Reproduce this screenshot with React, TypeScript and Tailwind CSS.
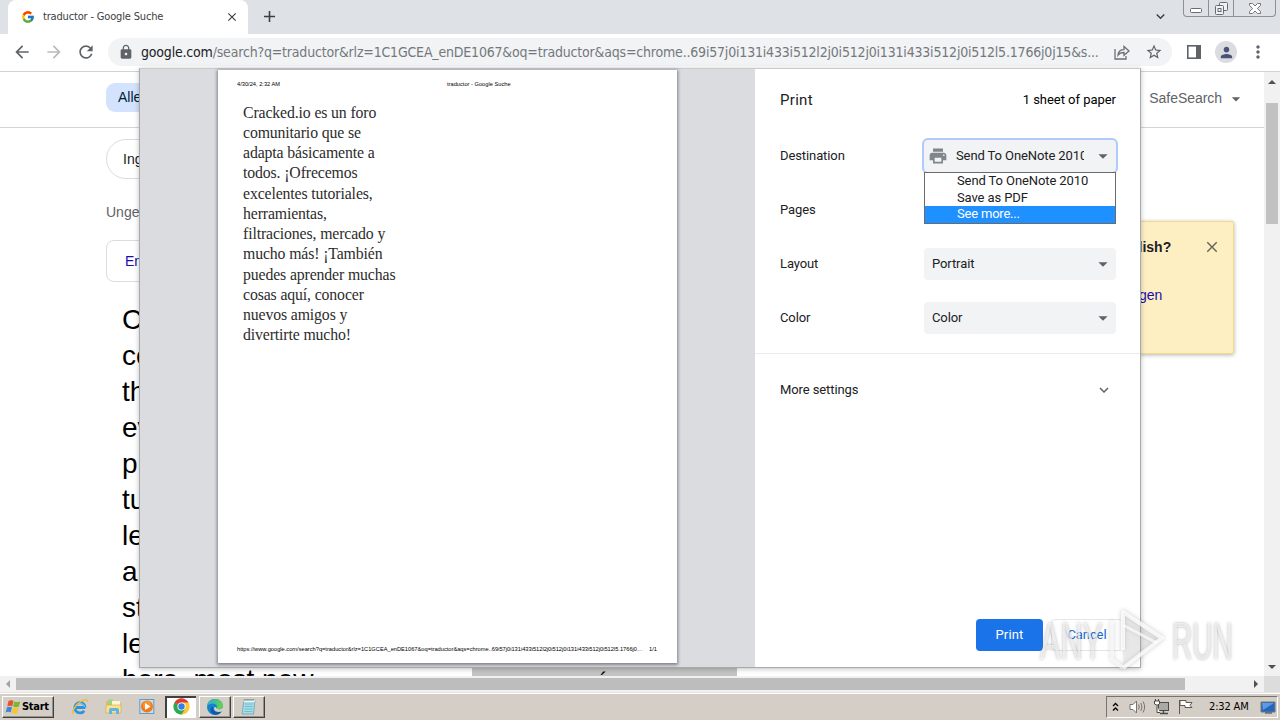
import React from "react";
import {
  MdAdd, MdArrowBack, MdArrowDropDown, MdArrowForward, MdClose, MdExpandMore, MdLock,
  MdMoreVert, MdPerson, MdPrint, MdRefresh, MdStarBorder,
} from "react-icons/md";
import { FcGoogle } from "react-icons/fc";

const previewLines = [
  "Cracked.io es un foro",
  "comunitario que se",
  "adapta básicamente a",
  "todos. ¡Ofrecemos",
  "excelentes tutoriales,",
  "herramientas,",
  "filtraciones, mercado y",
  "mucho más! ¡También",
  "puedes aprender muchas",
  "cosas aquí, conocer",
  "nuevos amigos y",
  "divertirte mucho!",
];

const translatedLines = ["C", "co", "th", "ev", "p", "tu", "le", "ar", "st", "le", "here, most new"];

function TabStrip() {
  return (
    <div className="flex h-[34px] bg-[#dee1e6] pl-2">
      <div className="flex h-full w-[240px] items-center rounded-t-lg bg-white pl-[13px] pr-[9px]">
        <FcGoogle size={14} />
        <span className="ml-2 flex-1 whitespace-nowrap pt-px font-['DejaVu_Sans_Condensed','DejaVu_Sans',sans-serif] text-[11px] tracking-[-0.17px] text-[#3c4043]">
          traductor - Google Suche
        </span>
        <MdClose size={14} className="text-[#3c4043]" />
      </div>
      <MdAdd size={19} className="ml-3 mt-[7px] text-[#3c4043]" />
      <div className="flex-1" />
      <MdExpandMore size={17} className="mr-[14px] mt-2 text-[#3c4043]" />
      <div className="mr-1 flex h-[17px] w-[93px] rounded-b-[4px] border border-t-0 border-[#8b919b] text-[#6b7078]">
        <div className="flex w-[25px] items-center justify-center border-r border-[#8b919b] pt-1">
          <svg width="12" height="8" viewBox="0 0 12 8"><rect x=".5" y="2.5" width="11" height="4" rx="1" fill="#fff" stroke="#666b73" /></svg>
        </div>
        <div className="flex w-[25px] items-center justify-center border-r border-[#8b919b]">
          <svg width="13" height="13" viewBox="0 0 13 13" fill="#f1f2f4" stroke="#666b73">
            <rect x="4.500" y=".5" width="8" height="8" rx="1" />
            <rect x=".5" y="3.500" width="8" height="9" rx="1" />
            <rect x="3" y="6.500" width="3" height="3" />
          </svg>
        </div>
        <div className="flex flex-1 items-center justify-center">
          <svg width="12" height="11" viewBox="0 0 12 11" fill="#fff" stroke="#666b73" strokeWidth=".9">
            <path d="M.5.5h3L6 3 8.500.5h3v2L8.300 5.500l3.200 3v2h-3L6 8l-2.500 2.500h-3v-2l3.200-3L.5 2.500z" />
          </svg>
        </div>
      </div>
    </div>
  );
}

function Toolbar() {
  return (
    <div className="flex h-[38px] items-center border-b border-[#d0d3d6] bg-white pb-px pl-3">
      <MdArrowBack size={20} className="shrink-0 text-[#5f6368]" />
      <MdArrowForward size={20} className="ml-3 shrink-0 text-[#b9bbbe]" />
      <MdRefresh size={20} className="ml-3 shrink-0 text-[#5f6368]" />
      <div className="ml-3 flex h-7 w-[1064px] shrink-0 items-center rounded-full bg-[#f1f3f4] pl-[10px]">
        <MdLock size={16} className="shrink-0 text-[#5f6368]" />
        <div className="ml-[7px] w-[960px] shrink-0 whitespace-nowrap pt-px font-['DejaVu_Sans_Condensed','DejaVu_Sans',sans-serif] text-[14px] font-extralight tracking-[-0.188px] text-[#74787d]">
          <span className="text-[#202124]">google.com</span>/search?q=traductor&amp;rlz=1C1GCEA_enDE1067&amp;oq=traductor&amp;aqs=chrome..69i57j0i131i433i512l2j0i512j0i131i433i512j0i512l5.1766j0j15&amp;s...
        </div>
        <svg className="ml-[13px] shrink-0" width="16" height="15" viewBox="0 0 16 15" fill="none" stroke="#6b6f74" strokeWidth="1.300">
          <path d="M1 4v10h11v-3M4 10c.4-3.500 2.500-5.300 6-5.300V1.500L15 6l-5 4.300V7.500C7.500 7.500 5.500 8 4 10z" />
        </svg>
        <MdStarBorder size={18} className="ml-[15px] shrink-0 text-[#5f6368]" />
      </div>
      <svg className="ml-[15px] shrink-0" width="14" height="14" viewBox="0 0 14 14" fill="none" stroke="#5f6368" strokeWidth="1.600">
        <rect x=".8" y=".8" width="12.400" height="12.400" />
        <path d="M11 1v12" strokeWidth="4" />
      </svg>
      <div className="ml-[14px] flex h-[22px] w-[22px] shrink-0 items-center justify-center rounded-full bg-[#dadce0]">
        <MdPerson size={17} className="text-[#4a5478]" />
      </div>
      <MdMoreVert size={20} className="ml-[11px] shrink-0 text-[#5f6368]" />
    </div>
  );
}

function ResultsPage() {
  return (
    <div className="flex min-w-0 flex-1 flex-col overflow-hidden bg-white font-['Liberation_Sans',Arial,sans-serif]">
      <div className="flex h-14 shrink-0 justify-between border-b border-[#d2d4d7]">
        <div className="ml-[106px] mt-[11px] flex h-[29px] w-[60px] items-center rounded-[9px] bg-[#d3e3fd] pl-3 text-[14px] text-[#001d35]">Alle</div>
        <div className="mr-[18px] flex h-[53px] items-center text-[14px] tracking-[-0.05px] text-[#5f6368]">
          SafeSearch
          <MdArrowDropDown size={20} className="ml-1" />
        </div>
      </div>
      <div className="flex justify-between">
        <div className="ml-[106px] w-[240px] pt-[11px]">
          <div className="flex h-10 w-[100px] items-center rounded-full border border-[#dadce0] pl-4 text-[14px] text-[#202124]">Ing</div>
          <div className="mt-[23px] h-5 text-[14px] leading-5 text-[#5f6368]">Unge</div>
          <div className="mt-[18px] flex h-[42px] w-[100px] items-center rounded-lg border border-[#dadce0] pl-[18px] text-[14px] text-[#1a0dab]">En</div>
          <div className="ml-4 mt-[20px] text-[28px] leading-[36px] text-black">
            {translatedLines.map((line, i) => (
              <div key={i} className={i === 10 ? "whitespace-nowrap" : "w-5"}>{line}</div>
            ))}
          </div>
        </div>
        <div className="mr-[30px] mt-[93px] h-[133px] w-[140px] rounded-[2px] border border-[#f0d98e] bg-[#feefc3] shadow-[0_1px_4px_rgba(0,0,0,0.3)]">
          <div className="flex items-center justify-between pl-[35px] pr-[12px] pt-[13px] text-[14px] font-bold text-[#202124]">
            <span className="pt-[2px]">glish?</span>
            <MdClose size={18} className="text-[#6b675c]" />
          </div>
          <div className="pl-[44px] pt-[27px] text-[14px] leading-5 text-[#1a0dab]">gen</div>
        </div>
      </div>
    </div>
  );
}

function Caret({ dir, color }: { dir: "up" | "down" | "left" | "right"; color: string }) {
  const paths = { up: "M0 6h8L4 2z", down: "M0 2h8L4 6z", left: "M6 0v8L2 4z", right: "M2 0v8l4-4z" };
  return <svg width="8" height="8" viewBox="0 0 8 8" fill={color}><path d={paths[dir]} /></svg>;
}

function VerticalScrollbar() {
  return (
    <div className="flex w-4 shrink-0 flex-col items-center justify-between bg-[#f1f1f1] pb-[5px] pt-[6px]">
      <div className="flex flex-col items-center">
        <Caret dir="up" color="#505050" />
        <div className="mt-[17px] h-[121px] w-3 bg-[#c1c1c1]" />
      </div>
      <Caret dir="down" color="#505050" />
    </div>
  );
}

function HorizontalScrollbar() {
  return (
    <div className="flex h-4 shrink-0 items-center bg-[#f1f1f1]">
      <div className="flex w-4 justify-center"><Caret dir="left" color="#a3a3a3" /></div>
      <div className="h-3 w-[1169px] bg-[#bdbdbd]" />
      <div className="flex flex-1 justify-end pr-1"><Caret dir="right" color="#505050" /></div>
      <div className="h-full w-4 bg-[#dcdcdc]" />
    </div>
  );
}

function WindowsFlag() {
  return (
    <svg width="17" height="16" viewBox="0 0 17 16">
      <path d="M3.500 2c2-1 3.500-.8 5 0L7.300 7.300c-1.600-.8-3.300-.9-5 0z" fill="#e8512a" />
      <path d="M9.300 2.400c2 .9 3.800 1 6 0l-1.400 5.200c-2 .9-3.800.9-5.700 0z" fill="#7cb62f" />
      <path d="M2 8.200c1.800-.8 3.400-.7 5 .1l-1.300 5.200c-1.600-.9-3.200-.9-5 0z" fill="#3f86d8" />
      <path d="M7.900 8.600c2 .9 3.700.9 5.700.1l-1.400 5.200c-2 .9-3.700.8-5.600-.1z" fill="#f8c62b" />
    </svg>
  );
}

function ExplorerE() {
  return (
    <svg width="18" height="18" viewBox="0 0 18 18" fill="none">
      <path d="M14.200 9.500H5.300M14.200 9.500a5.200 5.200 0 1 0-1 3.300" stroke="#2c93dc" strokeWidth="2.800" />
      <path d="M13.700 9.200a4.800 4.800 0 0 0-9.200-1" stroke="#7fd0f6" strokeWidth="1" />
      <path d="M2.700 15.800C-.5 15 5 5.500 12 2.400c3.300-1.400 4.800-.7 4.100 1.600" stroke="#eebc36" strokeWidth="1.400" />
    </svg>
  );
}

function FolderIcon() {
  return (
    <svg width="18" height="17" viewBox="0 0 18 17">
      <path d="M1 3h6l1 2h8v10H1z" fill="#e5bd55" />
      <path d="M3 1.500h5V7H3z" fill="#9bd38b" />
      <path d="M7 3h8v5H7z" fill="#fff6cb" />
      <path d="M1 7h15v8H1z" fill="#f8e28d" stroke="#d4aa48" strokeWidth=".6" />
      <path d="M4 16v-4q0-2 2-2h6q2 0 2 2v4h-3v-3H7v3z" fill="#63b5e1" />
    </svg>
  );
}

function MediaIcon() {
  return (
    <svg width="17" height="17" viewBox="0 0 17 17">
      <rect x=".8" y="1.500" width="14" height="14" fill="#c6def1" stroke="#639bc8" />
      <circle cx="8" cy="8.500" r="6" fill="#f37a13" />
      <circle cx="8" cy="7" r="4" fill="#ffa444" opacity=".6" />
      <path d="M6 5v7l5.300-3.500z" fill="#fff" />
    </svg>
  );
}

function ChromeIcon() {
  return (
    <svg width="17" height="17" viewBox="0 0 48 48">
      <path d="M24 24 4.100 12.500A23 23 0 0 1 43.900 12.500z" fill="#e33b2e" />
      <path d="M24 24 4.100 12.500A23 23 0 0 0 24 47z" fill="#2da94f" />
      <path d="M24 24V47A23 23 0 0 0 43.900 12.500H24z" fill="#fcc934" />
      <path d="M13.600 30 4.100 12.500 14 18zM34.500 30 24 47l-3-13z" fill="#2da94f" />
      <circle cx="24" cy="24" r="11.500" fill="#fff" />
      <circle cx="24" cy="24" r="9" fill="#357de8" />
    </svg>
  );
}

function EdgeIcon() {
  return (
    <svg width="18" height="18" viewBox="0 0 18 18">
      <defs>
        <linearGradient id="edge-top" x1="0" y1="0" x2="1" y2=".5">
          <stop offset="0" stopColor="#2aa9df" />
          <stop offset="1" stopColor="#63d448" />
        </linearGradient>
      </defs>
      <circle cx="9" cy="9" r="8" fill="#1481d2" />
      <path d="M1 8.500C1.300 4 4.800 1 9 1c4.800 0 8 3.300 8 6.600 0 2.500-1.800 3.700-4 3.700-2 0-2.500-.6-2.500-1.200 0-.7.700-.8.500-2C10.600 5 3.500 4.300 1 8.500z" fill="url(#edge-top)" />
      <path d="M7 9c-.8 4 3.500 6.500 8.500 4.500C12.500 18.500 5 17.500 4.500 12 4.400 10.500 5.500 9 7 9z" fill="#1457a3" />
      <path d="M10.500 10.100c0 .7.700 1.200 2.500 1.200 1.700 0 3.300-.8 4-2.300l1 3-2.500 1.500C11 15 7 12.500 8.300 9.500q1-1.500 2.200.6z" fill="#d5cfc7" />
    </svg>
  );
}

function NotepadIcon() {
  return (
    <svg width="16" height="18" viewBox="0 0 16 18">
      <path d="M3 2h11l-1.500 14H1z" fill="#a5dce7" stroke="#609daa" strokeWidth=".7" />
      <path d="M3 2h11l-.4 2H2.700z" fill="#edf5f6" />
      <path d="M4 6h8M3.700 8.500h8M3.500 11h8M3.300 13.500h8" stroke="#68b8cb" strokeWidth=".8" />
      <path d="M4 1v2M6 1v2M8 1v2M10 1v2M12 1v2" stroke="#65736f" strokeWidth=".8" />
    </svg>
  );
}

const raised = "border border-b-[#404040] border-l-white border-r-[#404040] border-t-white shadow-[inset_-1px_-1px_0_#97928b]";

function Taskbar() {
  return (
    <div className="flex h-[28px] shrink-0 items-center border-t border-[#e8e5e0] bg-[#d4cec6] pl-[2px] shadow-[inset_0_1px_0_#fff]">
      <div className={`mt-px flex h-[22px] w-[52px] items-center pl-[2px] font-['DejaVu_Sans_Condensed','DejaVu_Sans',sans-serif] text-[11px] font-bold tracking-[-0.3px] text-black ${raised}`}>
        <WindowsFlag />
        <span className="pt-px">Start</span>
      </div>
      <div className="ml-[17px]"><ExplorerE /></div>
      <div className="ml-4"><FolderIcon /></div>
      <div className="ml-4"><MediaIcon /></div>
      <div className="ml-[9px] flex h-[22px] w-[31px] items-center justify-center border-l-2 border-t-2 border-l-[#404040] border-t-[#404040] bg-white pb-[2px]"><ChromeIcon /></div>
      <div className={`ml-[3px] mt-px flex h-[22px] w-8 items-center justify-center ${raised}`}><EdgeIcon /></div>
      <div className={`ml-[2px] mt-px flex h-[22px] w-8 items-center justify-center ${raised}`}><NotepadIcon /></div>
      <div className="flex-1" />
      <div className="mr-[2px] flex h-[22px] w-[172px] items-center border border-b-white border-l-[#77736d] border-r-white border-t-[#77736d] pl-[5px]">
        <svg width="7" height="10" viewBox="0 0 7 10" fill="none" stroke="#000" strokeWidth="1.300"><path d="m1 4 2.500-2.500L6 4M1 8.500 3.500 6 6 8.500" /></svg>
        <svg className="ml-[10px]" width="17" height="16" viewBox="0 0 17 16" fill="none" stroke="#77736d">
          <path d="M1 5.500h3L7.500 2v12L4 10.500H1z" fill="#fff" />
          <path d="M9.500 5.500q1.500 2.500 0 5M11.800 4q2.400 4 0 8M14 2.500q3.300 5.500 0 11" />
        </svg>
        <svg className="ml-[7px]" width="17" height="17" viewBox="0 0 17 17" fill="none" stroke="#4d4b48">
          <rect x="5.500" y="4.500" width="10" height="8" fill="#aaa9a6" />
          <path d="M7 15.500h8M10.500 13v2" strokeWidth="1.400" />
          <path d="M1.500 3v3q2.500 2.500 5 0V3zM2.500 1v2M5.500 1v2M4 7.500v7h3" fill="#fff" />
        </svg>
        <svg className="ml-[7px]" width="17" height="17" viewBox="0 0 17 17" fill="#fff" stroke="#5b5955">
          <path d="M2.500 2v14M3 2.500h6v2h6l-2 3 2 2H8v-2H3z" />
        </svg>
        <span className="ml-[15px] mt-px w-[43px] whitespace-nowrap font-['DejaVu_Sans_Condensed','DejaVu_Sans',sans-serif] text-[11px] tracking-[-0.15px] text-black">2:32 AM</span>
        <svg className="ml-2" width="16" height="14" viewBox="0 0 16 14">
          <path d="M1 2h14v10H1z" fill="#2565bd" stroke="#777" />
          <path d="M2 3h12L3 10z" fill="#5c9ae3" />
          <path d="M5 13h7" stroke="#313e58" />
        </svg>
      </div>
    </div>
  );
}

function PrintPreview() {
  return (
    <div className="w-[615px] bg-[#dadce0] pl-[78px] pt-px">
      <div className="flex h-[593px] w-[459px] flex-col bg-white px-[19px] pb-[9px] pt-[9px] font-['Liberation_Sans',Arial,sans-serif] text-[5.700px] leading-[10px] text-black shadow-[0_1px_3px_1px_rgba(80,80,95,0.65)]">
        <div className="flex">
          <span className="w-[210px]">4/30/24, 2:32 AM</span>
          <span>traductor - Google Suche</span>
        </div>
        <div className="ml-[6px] mt-[13.500px] flex-1 whitespace-nowrap font-['Liberation_Serif','Times_New_Roman',serif] text-[15.800px] leading-[20.270px] tracking-[-0.13px] text-[#2c2c2c]">
          {previewLines.map((line) => <div key={line}>{line}</div>)}
        </div>
        <div className="flex whitespace-nowrap">
          <span className="w-[412px]">https://www.google.com/search?q=traductor&amp;rlz=1C1GCEA_enDE1067&amp;oq=traductor&amp;aqs=chrome..69i57j0i131i433i512l2j0i512j0i131i433i512j0i512l5.1766j0…</span>
          <span>1/1</span>
        </div>
      </div>
    </div>
  );
}

function SettingRow({ label, value }: { label: string; value: string }) {
  return (
    <div className="flex h-[54px] items-center justify-between pl-[25px] pr-6">
      <span>{label}</span>
      <div className="flex h-8 w-48 items-center justify-between rounded bg-[#f1f3f4] pl-2 pr-[3px]">
        {value}
        <MdArrowDropDown size={22} className="-mr-px text-[#5f6368]" />
      </div>
    </div>
  );
}

function PrintSettings() {
  return (
    <div className="flex flex-1 flex-col bg-white font-[Roboto,sans-serif] text-[13px] tracking-[-0.1px] text-[#202124]">
      <div className="flex h-[60px] items-center justify-between pl-[25px] pr-6 pt-[2px]">
        <span className="text-[15px] tracking-[0.3px]">Print</span>
        <span className="tracking-[-0.03px] text-black">1 sheet of paper</span>
      </div>
      <div className="relative flex h-[54px] items-center justify-between pl-[25px] pr-6">
        <span>Destination</span>
        <div className="flex h-8 w-48 items-center rounded bg-[#f1f3f4] pl-1 pr-[2px] shadow-[0_0_0_2px_#aecbfa]">
          <MdPrint size={20} className="shrink-0 text-[#80868b]" />
          <span className="ml-2 w-[128px] overflow-hidden whitespace-nowrap">Send To OneNote 2010</span>
          <MdArrowDropDown size={22} className="ml-2 shrink-0 text-[#5f6368]" />
        </div>
        <div className="absolute right-6 top-[43px] z-10 h-[52px] w-48 whitespace-nowrap border border-[#6b6b6b] bg-white">
          <div className="h-[17px] pl-8 leading-4">Send To OneNote 2010</div>
          <div className="h-[16px] pl-8 leading-4">Save as PDF</div>
          <div className="h-[17px] bg-[#1e90ff] pl-8 leading-4 tracking-[-0.2px] text-white">See more...</div>
        </div>
      </div>
      <div className="flex h-[54px] items-center pl-[25px]">Pages</div>
      <SettingRow label="Layout" value="Portrait" />
      <SettingRow label="Color" value="Color" />
      <div className="mt-[8px] flex h-[73px] items-center justify-between border-t border-[#e8eaed] pl-[25px] pr-[27px]">
        <span>More settings</span>
        <MdExpandMore size={18} className="text-[#5f6368]" />
      </div>
      <div className="flex-1" />
      <div className="mb-4 flex h-8 justify-end gap-2 pr-[17px]">
        <button className="w-[67px] rounded bg-[#1a73e8] tracking-[0.15px] text-white">Print</button>
        <button className="w-[72px] rounded border border-[#e4e6e9] text-[#1967d2]">Cancel</button>
      </div>
    </div>
  );
}

function Watermark() {
  return (
    <div className="pointer-events-none absolute left-[1040px] top-[608px] z-30 flex h-[66px] w-[194px] items-center justify-between font-['Liberation_Sans',Arial,sans-serif] text-[51px] leading-none text-white/60">
      <div className="w-[62px] origin-left scale-x-[0.6] whitespace-nowrap [text-shadow:0_0_4px_rgba(90,90,90,0.45)]">ANY</div>
      <svg className="shrink-0" width="60" height="66" viewBox="0 0 60 66" fill="none" strokeLinejoin="round" style={{ filter: "drop-shadow(0 0 2px rgba(90,90,90,.4))" }}>
        <path d="M16 4 55 30 16 60z" fill="rgba(190,190,190,.2)" />
        <path d="M16 42V4l39 26-39 30" stroke="#fff" strokeOpacity=".8" strokeWidth="4" />
        <path d="M16 17l34 18" stroke="#fff" strokeOpacity=".7" strokeWidth="3" />
        <path d="M5 13v38l11 9" stroke="#fff" strokeOpacity=".6" strokeWidth="4" />
      </svg>
      <div className="w-[62px] origin-left scale-x-[0.55] whitespace-nowrap [text-shadow:0_0_4px_rgba(90,90,90,0.45)]">RUN</div>
    </div>
  );
}

export default function App() {
  return (
    <div className="relative flex h-[720px] w-[1280px] flex-col overflow-hidden bg-white">
      <TabStrip />
      <Toolbar />
      <div className="relative flex h-[604px] shrink-0">
        <ResultsPage />
        <div className="absolute left-[472px] top-[590px] h-[14px] w-[265px] overflow-hidden bg-[#c4c4c4]">
          <span className="absolute left-[128px] top-[9px] font-['Liberation_Sans',Arial,sans-serif] text-[22px] leading-5 text-black">´</span>
        </div>
        <VerticalScrollbar />
      </div>
      <HorizontalScrollbar />
      <Taskbar />
      <div className="absolute left-[139px] top-[68px] z-20 flex h-[600px] w-[1002px] border border-t-[#c8cacd] border-[#a7a9ac] shadow-[0_1px_5px_rgba(0,0,0,0.25)]">
        <PrintPreview />
        <PrintSettings />
      </div>
      <Watermark />
    </div>
  );
}
